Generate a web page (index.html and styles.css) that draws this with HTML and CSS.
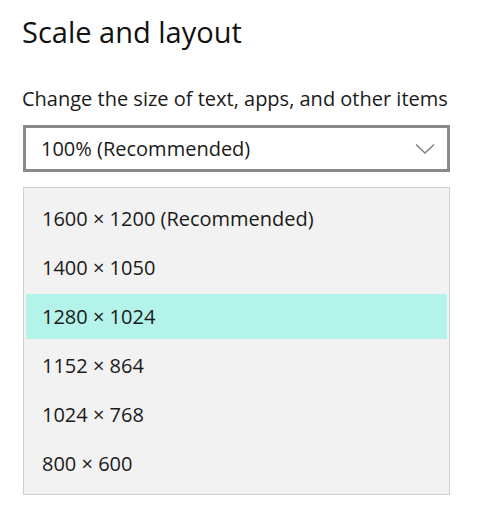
FILE: index.html
```html
<!DOCTYPE html>
<html lang="en">
<head>
    <meta charset="UTF-8">
    <title>Scale and layout</title>
    <link rel="stylesheet" href="styles.css">
</head>
<body>
    <div class="settings">
        <h1 class="title">Scale and layout</h1>

        <div class="field">
            <label class="field-label">Change the size of text, apps, and other items</label>
            <div class="combo">
                <span class="combo-value">100% (Recommended)</span>
                <svg class="chevron" width="20" height="12" viewBox="0 0 20 12">
                    <path d="M1 1.5 L10 10 L19 1.5" fill="none" stroke="#7a7a7a" stroke-width="1.3"/>
                </svg>
            </div>
        </div>

        <!-- open resolution list -->
        <ul class="options">
            <li class="option">1600 × 1200 (Recommended)</li>
            <li class="option">1400 × 1050</li>
            <li class="option selected">1280 × 1024</li>
            <li class="option">1152 × 864</li>
            <li class="option">1024 × 768</li>
            <li class="option">800 × 600</li>
        </ul>
    </div>
</body>
</html>
```

FILE: styles.css
```css
body {
    margin: 0;
    background: #ffffff;
    font-family: "Open Sans", "Noto Sans", sans-serif;
    color: #1a1a1a;
}
.settings {
    padding: 12px 0 0 23px;
    width: 427px;
}
.title {
    margin: 0 0 0 -1px;
    font-size: 29px;
    font-weight: 400;
    line-height: 40px;
    color: #111;
}
.field {
    margin-top: 35px;
}
.field-label {
    display: block;
    font-size: 20px;
    line-height: 24px;
    margin-left: -1px;
}
.combo {
    display: flex;
    align-items: center;
    justify-content: space-between;
    height: 41px;
    margin-top: 14px;
    padding: 0 12px 0 15px;
    border: 3px solid #8a8a8a;
    background: #fff;
}
.combo-value {
    font-size: 20px;
}
.chevron {
    display: block;
}
.options {
    list-style: none;
    margin: 15px 0 0 0;
    padding: 4px 1px;
    background: #f2f2f2;
    border: 1px solid #d0d0d0;
}
.option {
    height: 45px;
    margin: 4px 1px;
    padding-left: 16px;
    display: flex;
    align-items: center;
    font-size: 20px;
    color: #1a1a1a;
}
.option.selected {
    background: #b3f3ea;
}
```
